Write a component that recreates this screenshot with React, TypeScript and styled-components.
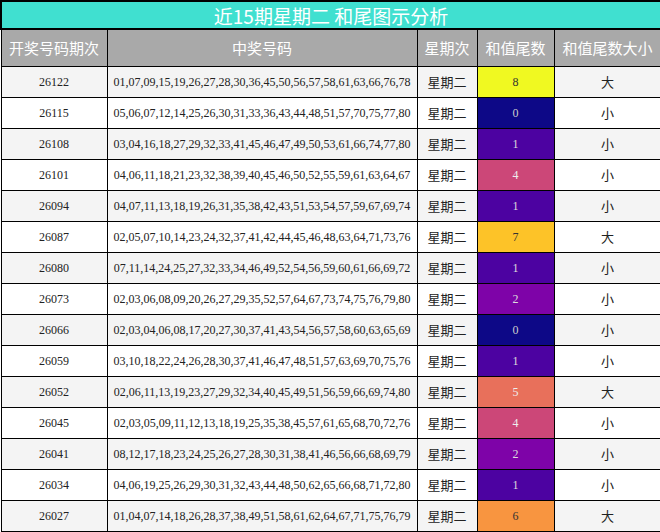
import React from "react";
import styled, { createGlobalStyle } from "styled-components";

const G = createGlobalStyle`
  body { margin: 0; background: #fff; }
`;

const Table = styled.table`
  width: 660px;
  border-collapse: collapse;
  table-layout: fixed;
  font-family: "Liberation Serif", "Noto Sans CJK SC", serif;
`;

const TitleRow = styled.tr`
  height: 28px;
`;

const Title = styled.th`
  padding: 0;
  background: #40e0d0;
  color: #fff;
  font-family: "Noto Sans CJK SC", sans-serif;
  font-weight: normal;
  font-size: 19px;
  border: 2px solid #000;
  line-height: 1;
`;

const HeadRow = styled.tr`
  height: 37px;
`;

const Head = styled.th`
  padding: 0;
  background: #a9a9a9;
  color: #fff;
  font-family: "Noto Sans CJK SC", sans-serif;
  font-weight: normal;
  font-size: 15px;
  line-height: 1;
  border: 1px solid #000;
`;

const Row = styled.tr<{ $alt: boolean }>`
  height: 31px;
  background: ${(p) => (p.$alt ? "#f4f4f4" : "#fff")};
`;

const Cell = styled.td<{ $cjk?: boolean; $bg?: string; $fg?: string }>`
  padding: 0;
  text-align: center;
  border: 1px solid #000;
  line-height: 1;
  font-size: ${(p) => (p.$cjk ? "13px" : "12px")};
  font-family: ${(p) =>
    p.$cjk ? `"Noto Sans CJK SC", sans-serif` : `"Liberation Serif", serif`};
  color: ${(p) => p.$fg || "#222"};
  background: ${(p) => p.$bg || "transparent"};
  white-space: nowrap;
`;

const colors: Record<number, [string, string]> = {
  0: ["#0d0887", "#ccc"],
  1: ["#4c02a1", "#ddd"],
  2: ["#7e03a8", "#ddd"],
  4: ["#cc4778", "#eee"],
  5: ["#e8705b", "#eee"],
  6: ["#f89540", "#333"],
  7: ["#fdc328", "#333"],
  8: ["#f0f921", "#333"],
};

const data: [string, string, number][] = [
  ["26122", "01,07,09,15,19,26,27,28,30,36,45,50,56,57,58,61,63,66,76,78", 8],
  ["26115", "05,06,07,12,14,25,26,30,31,33,36,43,44,48,51,57,70,75,77,80", 0],
  ["26108", "03,04,16,18,27,29,32,33,41,45,46,47,49,50,53,61,66,74,77,80", 1],
  ["26101", "04,06,11,18,21,23,32,38,39,40,45,46,50,52,55,59,61,63,64,67", 4],
  ["26094", "04,07,11,13,18,19,26,31,35,38,42,43,51,53,54,57,59,67,69,74", 1],
  ["26087", "02,05,07,10,14,23,24,32,37,41,42,44,45,46,48,63,64,71,73,76", 7],
  ["26080", "07,11,14,24,25,27,32,33,34,46,49,52,54,56,59,60,61,66,69,72", 1],
  ["26073", "02,03,06,08,09,20,26,27,29,35,52,57,64,67,73,74,75,76,79,80", 2],
  ["26066", "02,03,04,06,08,17,20,27,30,37,41,43,54,56,57,58,60,63,65,69", 0],
  ["26059", "03,10,18,22,24,26,28,30,37,41,46,47,48,51,57,63,69,70,75,76", 1],
  ["26052", "02,06,11,13,19,23,27,29,32,34,40,45,49,51,56,59,66,69,74,80", 5],
  ["26045", "02,03,05,09,11,12,13,18,19,25,35,38,45,57,61,65,68,70,72,76", 4],
  ["26041", "08,12,17,18,23,24,25,26,27,28,30,31,38,41,46,56,66,68,69,79", 2],
  ["26034", "04,06,19,25,26,29,30,31,32,43,44,48,50,62,65,66,68,71,72,80", 1],
  ["26027", "01,04,07,14,18,26,28,37,38,49,51,58,61,62,64,67,71,75,76,79", 6],
];

export default function App() {
  return (
    <>
      <G />
      <Table>
        <colgroup>
          <col style={{ width: 106 }} />
          <col style={{ width: 310 }} />
          <col style={{ width: 60 }} />
          <col style={{ width: 77 }} />
          <col style={{ width: 107 }} />
        </colgroup>
        <thead>
          <TitleRow>
            <Title colSpan={5}>近15期星期二 和尾图示分析</Title>
          </TitleRow>
          <HeadRow>
            <Head>开奖号码期次</Head>
            <Head>中奖号码</Head>
            <Head>星期次</Head>
            <Head>和值尾数</Head>
            <Head>和值尾数大小</Head>
          </HeadRow>
        </thead>
        <tbody>
          {data.map(([id, nums, t], i) => (
            <Row key={id} $alt={i % 2 === 0}>
              <Cell>{id}</Cell>
              <Cell>{nums}</Cell>
              <Cell $cjk>星期二</Cell>
              <Cell $bg={colors[t][0]} $fg={colors[t][1]}>{t}</Cell>
              <Cell $cjk>{t >= 5 ? "大" : "小"}</Cell>
            </Row>
          ))}
        </tbody>
      </Table>
    </>
  );
}
